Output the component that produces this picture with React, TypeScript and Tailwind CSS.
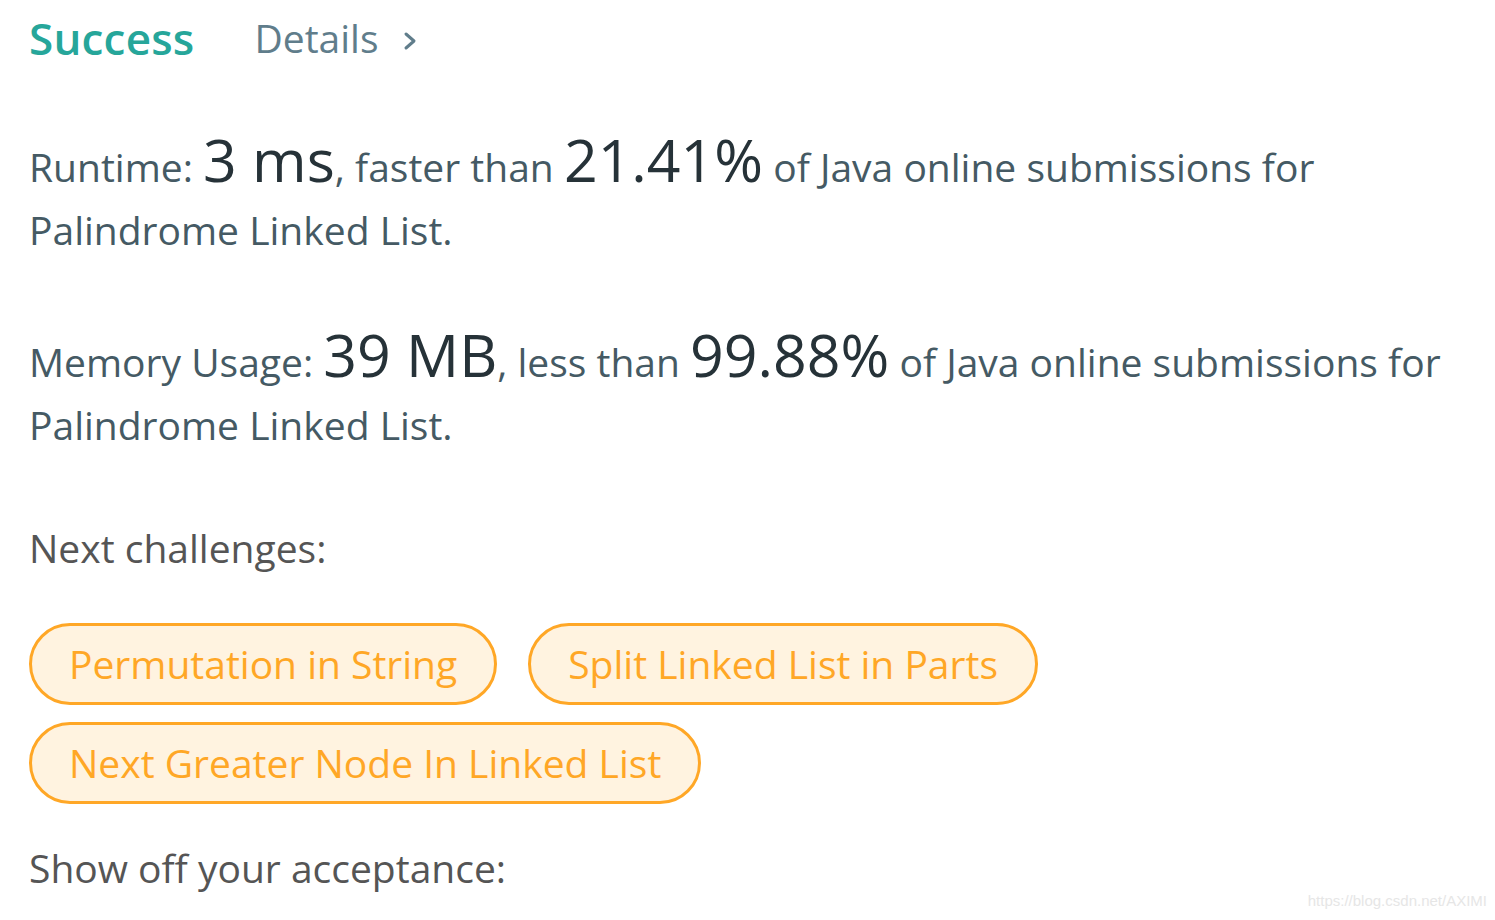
export default function App() {
  const challenges = [
    ["Permutation in String", "Split Linked List in Parts"],
    ["Next Greater Node In Linked List"],
  ];

  return (
    <div className="relative h-[920px] w-[1495px] overflow-hidden bg-white font-['Open_Sans',sans-serif]">
      <div className="px-[29px] pt-[6px]">
        <div className="flex items-center h-[64px]">
          <span className="text-[44px] font-semibold text-[#26a69a] tracking-[0.2px]">Success</span>
          <span className="ml-[60px] text-[39px] text-[#607d8b]">Details</span>
          <svg className="ml-[24px] mt-[6px]" width="16" height="22" viewBox="0 0 16 22" fill="none">
            <path d="M4 4l8 7-8 7" stroke="#607d8b" strokeWidth="3" strokeLinecap="round" strokeLinejoin="round" />
          </svg>
        </div>

        <p className="mt-[58px] text-[39px] leading-[63px] text-[#455a64]">
          <span className="whitespace-nowrap">
            Runtime: <span className="text-[59px] text-[#263238]">3 ms</span>, faster than{" "}
            <span className="text-[59px] text-[#263238]">21.41%</span> of Java online submissions for
          </span>
          <br />
          Palindrome Linked List.
        </p>

        <p className="mt-[62px] text-[39px] leading-[63px] text-[#455a64]">
          <span className="whitespace-nowrap">
            Memory Usage: <span className="text-[59px] text-[#263238]">39 MB</span>, less than{" "}
            <span className="text-[59px] text-[#263238]">99.88%</span> of Java online submissions for
          </span>
          <br />
          Palindrome Linked List.
        </p>

        <p className="mt-[60px] text-[39px] leading-[63px] text-[#555]">Next challenges:</p>

        <div className="mt-[44px] flex flex-col gap-[17px]">
          {challenges.map((row, i) => (
            <div key={i} className="flex gap-[31px]">
              {row.map((c) => (
                <div
                  key={c}
                  className="flex h-[82px] items-center rounded-full border-[3px] border-[#ffa726] bg-[#fff3e0] px-[37px] text-[39px] text-[#ffa726]"
                >
                  {c}
                </div>
              ))}
            </div>
          ))}
        </div>

        <p className="mt-[32px] text-[39px] leading-[63px] text-[#555]">Show off your acceptance:</p>
      </div>

      <div className="absolute bottom-[8px] right-[8px] font-['Liberation_Sans',sans-serif] text-[15px] text-[#e6e6e6]">
        https://blog.csdn.net/AXIMI
      </div>
    </div>
  );
}
